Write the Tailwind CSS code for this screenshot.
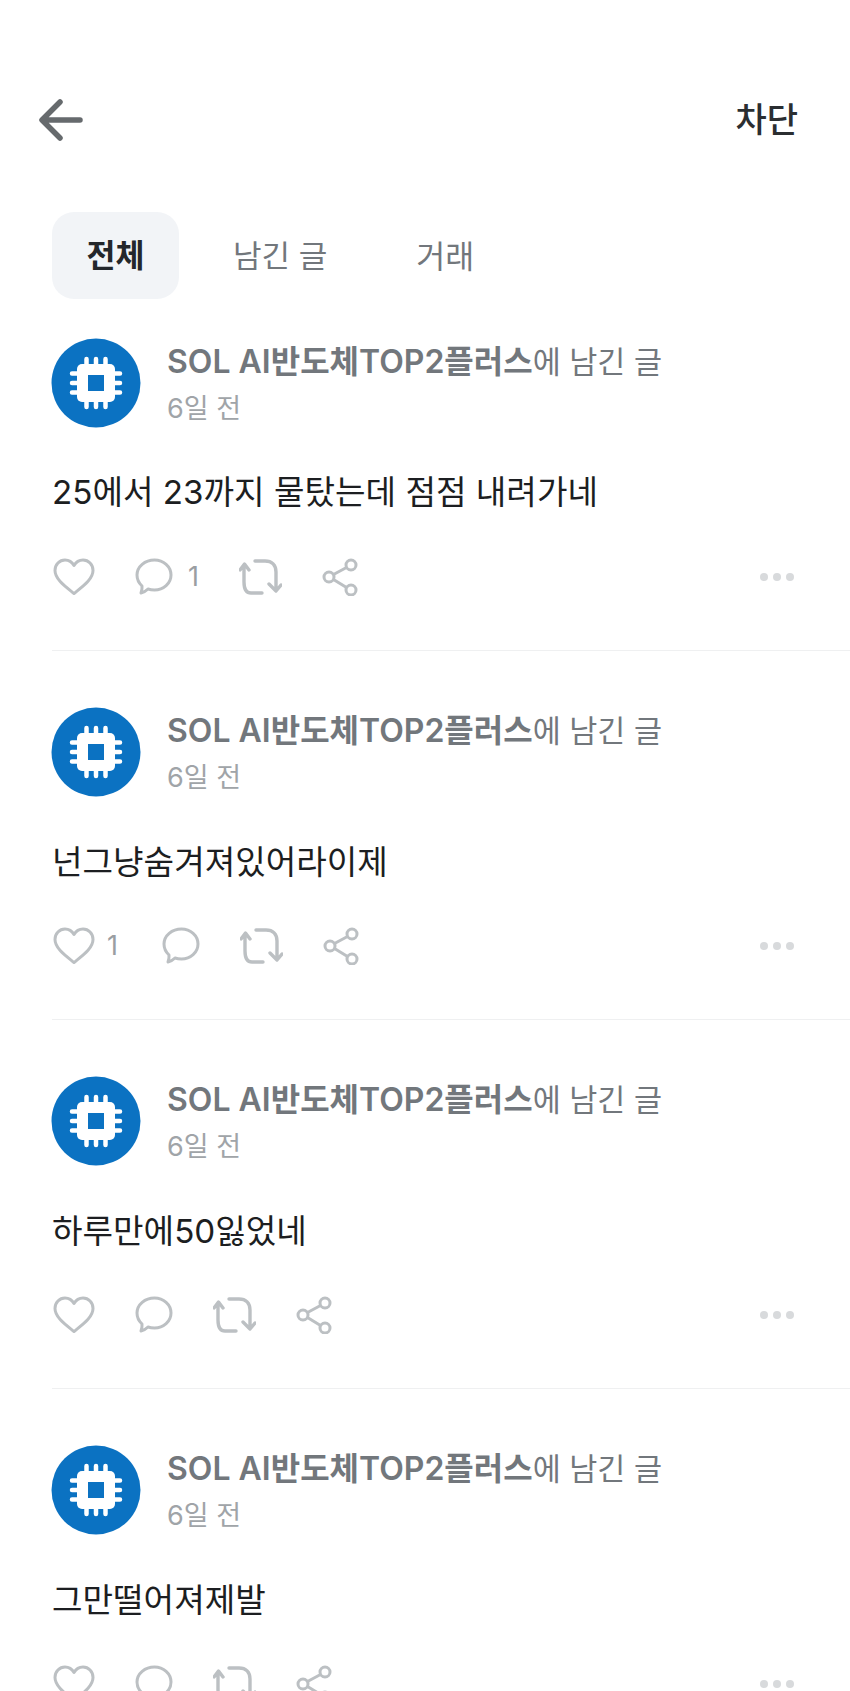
<!DOCTYPE html>
<html lang="ko">
<head>
    <meta charset="UTF-8">
    <title>프로필</title>
    <script src="https://cdn.jsdelivr.net/npm/@tailwindcss/browser@4"></script>
</head>
<body class="bg-white h-[1691px] overflow-hidden font-['Inter','Noto_Sans_CJK_KR',sans-serif]">

    <svg class="hidden">
        <symbol id="chip" viewBox="0 0 90 90">
            <circle cx="45" cy="45" r="44.5" fill="#0b72c2"/>
            <path d="M35.500 21v48M45 21v48M54.500 21v48M21 35.500h48M21 45h48M21 54.500h48" stroke="#fff" stroke-width="4.500" stroke-linecap="round"/>
            <rect x="26" y="26" width="38" height="38" rx="5" fill="#fff"/>
            <rect x="37" y="37" width="16" height="16" fill="#0b72c2"/>
        </symbol>
        <symbol id="heart" viewBox="0 0 42 38">
            <path d="M21 35.500C13 29 2 21.500 2 12.500 2 6.500 6.500 2 12 2c4 0 7 2 9 5.500C23 4 26 2 30 2c5.500 0 10 4.500 10 10.500 0 9-11 16.500-19 23Z" fill="none" stroke="#bcc0c3" stroke-width="3" stroke-linejoin="round"/>
        </symbol>
        <symbol id="comment" viewBox="0 0 38 38">
            <path d="M19.500 2C28.500 2 36 8.500 36 17s-7.500 15-16.500 15c-2.500 0-4.500-.3-6.500-1-2 2-4.500 3.500-7 4 .9-2.500 1.300-4.500 1-7C3.800 25 2 21.500 2 17 2 8.500 10 2 19.500 2Z" fill="none" stroke="#bcc0c3" stroke-width="3" stroke-linejoin="round"/>
        </symbol>
        <symbol id="repost" viewBox="0 0 43 38">
            <path d="M16 3h10c7 0 11 4 11 11v18M30 26l7 7 5-6M12 35h11M12 35C6 35 5 29 5 24V7M1 12l4.500-6L10 12" fill="none" stroke="#bcc0c3" stroke-width="3.400" stroke-linecap="round" stroke-linejoin="round"/>
        </symbol>
        <symbol id="share" viewBox="0 0 36 38">
            <g fill="none" stroke="#bcc0c3" stroke-width="3">
                <circle cx="7" cy="19" r="5"/>
                <circle cx="29" cy="7" r="5"/>
                <circle cx="29" cy="32" r="5"/>
                <path d="M11.500 16.500 24.500 9.500M11.500 21.500 24.500 29.500"/>
            </g>
        </symbol>
    </svg>

    <header class="flex items-center justify-between h-[240px] pl-[39px] pr-[52px]">
        <svg class="w-[44px] h-[42px]" viewBox="0 0 44 42" fill="none" stroke="#666a6d" stroke-width="5.500" stroke-linecap="round" stroke-linejoin="round">
            <path d="M41 21H4M21 3 3 21l18 18"/>
        </svg>
        <span class="text-[34px] leading-none font-medium text-[#2b2e31]">차단</span>
    </header>

    <nav class="flex items-center h-[87px] mt-[-28px] ml-[52px] pt-[2px]">
        <span class="flex items-center justify-center w-[127px] h-[87px] mt-[-2px] rounded-[22px] bg-[#f2f4f7] text-[31.500px] font-bold text-[#24272b]">전체</span>
        <span class="ml-[54px] text-[31px] text-[#72777c]">남긴 글</span>
        <span class="ml-[89px] text-[31.500px] text-[#72777c]">거래</span>
    </nav>

    <main class="mt-[39px] pl-[52px]">
        <article class="h-[313px] border-b border-[#eff0f1]">
            <div class="flex items-center gap-[26px]">
                <svg class="w-[90px] h-[90px] -ml-[1px]"><use href="#chip"/></svg>
                <div class="flex flex-col gap-[11px] mt-[4px]">
                    <p class="text-[30.500px] leading-[37px] text-[#72777c]"><b class="text-[32px] font-semibold">SOL AI반도체TOP2플러스</b>에 남긴 글</p>
                    <p class="text-[27px] leading-[36px] text-[#a0a4a8]">6일 전</p>
                </div>
            </div>
            <p class="mt-[41px] text-[33.200px] leading-[46px] text-[#1c1e21]">25에서 23까지 물탔는데 점점 내려가네</p>
            <div class="flex items-center h-[38px] mt-[43px] pr-[52px] gap-[40px] pl-[1px]">
                <svg class="w-[42px] h-[38px]"><use href="#heart"/></svg>
                <div class="flex items-center gap-[15px]">
                    <svg class="w-[38px] h-[38px]"><use href="#comment"/></svg>
                    <span class="text-[27px] text-[#9a9ea2]">1</span>
                </div>
                <svg class="w-[43px] h-[38px]"><use href="#repost"/></svg>
                <svg class="w-[36px] h-[38px]"><use href="#share"/></svg>
                <div class="ml-auto flex gap-[5px] mr-[4px]">
                    <i class="block w-[8px] h-[8px] rounded-full bg-[#d8dadc]"></i>
                    <i class="block w-[8px] h-[8px] rounded-full bg-[#d8dadc]"></i>
                    <i class="block w-[8px] h-[8px] rounded-full bg-[#d8dadc]"></i>
                </div>
            </div>
        </article>

        <article class="h-[369px] pt-[56px] border-b border-[#eff0f1]">
            <div class="flex items-center gap-[26px]">
                <svg class="w-[90px] h-[90px] -ml-[1px]"><use href="#chip"/></svg>
                <div class="flex flex-col gap-[11px] mt-[4px]">
                    <p class="text-[30.500px] leading-[37px] text-[#72777c]"><b class="text-[32px] font-semibold">SOL AI반도체TOP2플러스</b>에 남긴 글</p>
                    <p class="text-[27px] leading-[36px] text-[#a0a4a8]">6일 전</p>
                </div>
            </div>
            <p class="mt-[42px] text-[33.200px] leading-[46px] text-[#1c1e21]">넌그냥숨겨져있어라이제</p>
            <div class="flex items-center h-[38px] mt-[42px] pr-[52px] gap-[40px] pl-[1px]">
                <div class="flex items-center gap-[12px]">
                    <svg class="w-[42px] h-[38px]"><use href="#heart"/></svg>
                    <span class="text-[27px] text-[#9a9ea2]">1</span>
                </div>
                <svg class="w-[38px] h-[38px] ml-[4px]"><use href="#comment"/></svg>
                <svg class="w-[43px] h-[38px]"><use href="#repost"/></svg>
                <svg class="w-[36px] h-[38px]"><use href="#share"/></svg>
                <div class="ml-auto flex gap-[5px] mr-[4px]">
                    <i class="block w-[8px] h-[8px] rounded-full bg-[#d8dadc]"></i>
                    <i class="block w-[8px] h-[8px] rounded-full bg-[#d8dadc]"></i>
                    <i class="block w-[8px] h-[8px] rounded-full bg-[#d8dadc]"></i>
                </div>
            </div>
        </article>

        <article class="h-[369px] pt-[56px] border-b border-[#eff0f1]">
            <div class="flex items-center gap-[26px]">
                <svg class="w-[90px] h-[90px] -ml-[1px]"><use href="#chip"/></svg>
                <div class="flex flex-col gap-[11px] mt-[4px]">
                    <p class="text-[30.500px] leading-[37px] text-[#72777c]"><b class="text-[32px] font-semibold">SOL AI반도체TOP2플러스</b>에 남긴 글</p>
                    <p class="text-[27px] leading-[36px] text-[#a0a4a8]">6일 전</p>
                </div>
            </div>
            <p class="mt-[42px] text-[33.200px] leading-[46px] text-[#1c1e21]">하루만에50잃었네</p>
            <div class="flex items-center h-[38px] mt-[42px] pr-[52px] gap-[40px] pl-[1px]">
                <svg class="w-[42px] h-[38px]"><use href="#heart"/></svg>
                <svg class="w-[38px] h-[38px]"><use href="#comment"/></svg>
                <svg class="w-[43px] h-[38px]"><use href="#repost"/></svg>
                <svg class="w-[36px] h-[38px]"><use href="#share"/></svg>
                <div class="ml-auto flex gap-[5px] mr-[4px]">
                    <i class="block w-[8px] h-[8px] rounded-full bg-[#d8dadc]"></i>
                    <i class="block w-[8px] h-[8px] rounded-full bg-[#d8dadc]"></i>
                    <i class="block w-[8px] h-[8px] rounded-full bg-[#d8dadc]"></i>
                </div>
            </div>
        </article>

        <article class="h-[369px] pt-[56px]">
            <div class="flex items-center gap-[26px]">
                <svg class="w-[90px] h-[90px] -ml-[1px]"><use href="#chip"/></svg>
                <div class="flex flex-col gap-[11px] mt-[4px]">
                    <p class="text-[30.500px] leading-[37px] text-[#72777c]"><b class="text-[32px] font-semibold">SOL AI반도체TOP2플러스</b>에 남긴 글</p>
                    <p class="text-[27px] leading-[36px] text-[#a0a4a8]">6일 전</p>
                </div>
            </div>
            <p class="mt-[42px] text-[33.200px] leading-[46px] text-[#1c1e21]">그만떨어져제발</p>
            <div class="flex items-center h-[38px] mt-[42px] pr-[52px] gap-[40px] pl-[1px]">
                <svg class="w-[42px] h-[38px]"><use href="#heart"/></svg>
                <svg class="w-[38px] h-[38px]"><use href="#comment"/></svg>
                <svg class="w-[43px] h-[38px]"><use href="#repost"/></svg>
                <svg class="w-[36px] h-[38px]"><use href="#share"/></svg>
                <div class="ml-auto flex gap-[5px] mr-[4px]">
                    <i class="block w-[8px] h-[8px] rounded-full bg-[#d8dadc]"></i>
                    <i class="block w-[8px] h-[8px] rounded-full bg-[#d8dadc]"></i>
                    <i class="block w-[8px] h-[8px] rounded-full bg-[#d8dadc]"></i>
                </div>
            </div>
        </article>
    </main>

</body>
</html>
